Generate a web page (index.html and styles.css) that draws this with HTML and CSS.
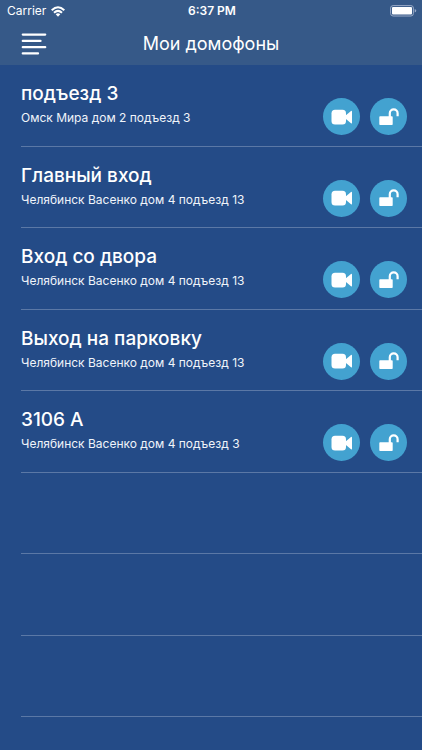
FILE: index.html
```html
<!DOCTYPE html>
<html lang="ru">
<head>
<meta charset="utf-8">
<meta name="viewport" content="width=device-width, initial-scale=1">
<title>Мои домофоны</title>
<link rel="stylesheet" href="styles.css">
</head>
<body>
<svg class="defs" aria-hidden="true">
  <symbol id="camera" viewBox="0 0 22 16">
    <rect x="0.500" y="0.800" width="14.500" height="14.700" rx="3.500"/>
    <path d="M14 7 L20 2 Q21 1.300 21 2.500 V13.800 Q21 15 20 14.300 L14 9.300 Z"/>
  </symbol>
  <symbol id="unlock" viewBox="0 0 20 18">
    <rect x="0.300" y="8.300" width="13.400" height="8.700" rx="0.800"/>
    <path d="M10.800 9 V5.300 A3.900 3.900 0 0 1 18.600 5.300 V8.300" fill="none" stroke="currentColor" stroke-width="2.200"/>
  </symbol>
</svg>
<header class="top">
  <div class="status">
    <div class="carrier">
      <span>Carrier</span>
      <svg class="wifi" viewBox="0 0 14 11" aria-hidden="true">
        <g fill="none" stroke="currentColor" stroke-width="2">
          <path d="M0.700 4.200 Q7 -1.700 13.300 4.200"/>
          <path d="M3 6.700 Q7 3 11 6.700"/>
        </g>
        <path d="M4.700 8.300 Q7 6.300 9.300 8.300 L7 10.700 Z" fill="currentColor"/>
      </svg>
    </div>
    <span class="time">6:37 PM</span>
    <svg class="battery" viewBox="0 0 27 12" aria-hidden="true">
      <rect x="0.600" y="0.600" width="22.800" height="10.400" rx="2.500" fill="none" stroke="#9aabc8"/>
      <rect x="2" y="2" width="20" height="7.600" rx="1" fill="#fff"/>
      <path d="M24.700 4 Q26.300 4.500 26.300 5.800 Q26.300 7.100 24.700 7.600 Z" fill="#9aabc8"/>
    </svg>
  </div>
  <div class="nav">
    <button class="menu" type="button" aria-label="Меню">
      <svg viewBox="0 0 26 22" aria-hidden="true">
        <path d="M1.800 1.600 H24.200 M1.800 7.900 H19.500 M1.800 14.200 H24.200 M1.800 20.400 H17" stroke="currentColor" stroke-width="2.300" stroke-linecap="round"/>
      </svg>
    </button>
    <h1>Мои домофоны</h1>
  </div>
</header>
<main>
  <ul class="list">
    <li class="row">
      <div class="info"><h2>подъезд 3</h2><p>Омск Мира дом 2 подъезд 3</p></div>
      <button class="round" type="button" aria-label="Камера"><svg class="cam"><use href="#camera"/></svg></button>
      <button class="round" type="button" aria-label="Открыть"><svg class="lock"><use href="#unlock"/></svg></button>
    </li>
    <li class="row">
      <div class="info"><h2>Главный вход</h2><p>Челябинск Васенко дом 4 подъезд 13</p></div>
      <button class="round" type="button" aria-label="Камера"><svg class="cam"><use href="#camera"/></svg></button>
      <button class="round" type="button" aria-label="Открыть"><svg class="lock"><use href="#unlock"/></svg></button>
    </li>
    <li class="row">
      <div class="info"><h2>Вход со двора</h2><p>Челябинск Васенко дом 4 подъезд 13</p></div>
      <button class="round" type="button" aria-label="Камера"><svg class="cam"><use href="#camera"/></svg></button>
      <button class="round" type="button" aria-label="Открыть"><svg class="lock"><use href="#unlock"/></svg></button>
    </li>
    <li class="row">
      <div class="info"><h2>Выход на парковку</h2><p>Челябинск Васенко дом 4 подъезд 13</p></div>
      <button class="round" type="button" aria-label="Камера"><svg class="cam"><use href="#camera"/></svg></button>
      <button class="round" type="button" aria-label="Открыть"><svg class="lock"><use href="#unlock"/></svg></button>
    </li>
    <li class="row">
      <div class="info"><h2>3106 А</h2><p>Челябинск Васенко дом 4 подъезд 3</p></div>
      <button class="round" type="button" aria-label="Камера"><svg class="cam"><use href="#camera"/></svg></button>
      <button class="round" type="button" aria-label="Открыть"><svg class="lock"><use href="#unlock"/></svg></button>
    </li>
    <li class="row" aria-hidden="true"></li>
    <li class="row" aria-hidden="true"></li>
    <li class="row" aria-hidden="true"></li>
  </ul>
</main>
</body>
</html>
```
FILE: styles.css
```css
* {
  box-sizing: border-box;
}

body {
  margin: 0;
  min-height: 100vh;
  display: flex;
  flex-direction: column;
  background: #244b87;
  color: #fff;
  font-family: Inter, "Liberation Sans", sans-serif;
}

h1, h2, p, ul {
  margin: 0;
  padding: 0;
}

.defs {
  position: absolute;
  width: 0;
  height: 0;
}

svg {
  display: block;
  fill: currentColor;
}

button {
  display: flex;
  align-items: center;
  justify-content: center;
  padding: 0;
  border: 0;
  background: none;
  color: inherit;
  cursor: pointer;
}

.top {
  background: #365988;
}

.status {
  display: grid;
  grid-template-columns: 1fr auto 1fr;
  align-items: center;
  height: 22px;
  padding: 0 5px 0 7px;
  font-size: 12px;
  line-height: 22px;
}

.carrier {
  display: flex;
  align-items: center;
  gap: 5px;
}

.wifi {
  width: 14px;
  height: 11px;
}

.time {
  font-weight: 600;
}

.battery {
  justify-self: end;
  width: 27px;
  height: 12px;
}

.nav {
  display: grid;
  grid-template-columns: 1fr auto 1fr;
  align-items: center;
  height: 43px;
  padding: 0 21px;
}

.menu {
  width: 26px;
  height: 22px;
}

.menu svg {
  width: 26px;
  height: 22px;
}

h1 {
  font-size: 18px;
  line-height: 24px;
  font-weight: 400;
}

main {
  flex: 1;
  display: flex;
}

/* Eight full rows, with a strip of the next one left free below. */
.list {
  flex: 1;
  display: grid;
  grid-template-rows: repeat(8, 5fr) 2fr;
  padding-left: 21px;
  list-style: none;
}

.row {
  display: flex;
  align-items: flex-start;
  gap: 10px;
  padding: 16px 15px 0 0;
  border-bottom: 1px solid #5b78a6;
}

.info {
  flex: 1;
  min-width: 0;
}

h2 {
  font-size: 19px;
  line-height: 26px;
  font-weight: 500;
}

p {
  font-size: 12px;
  line-height: 18px;
  margin-top: 2px;
  color: #f0f4fa;
}

.round {
  flex: none;
  width: 37px;
  height: 37px;
  margin-top: 17px;
  border-radius: 50%;
  background: #43a2d0;
}

.cam {
  width: 22px;
  height: 16px;
}

.lock {
  width: 20px;
  height: 18px;
}
```
